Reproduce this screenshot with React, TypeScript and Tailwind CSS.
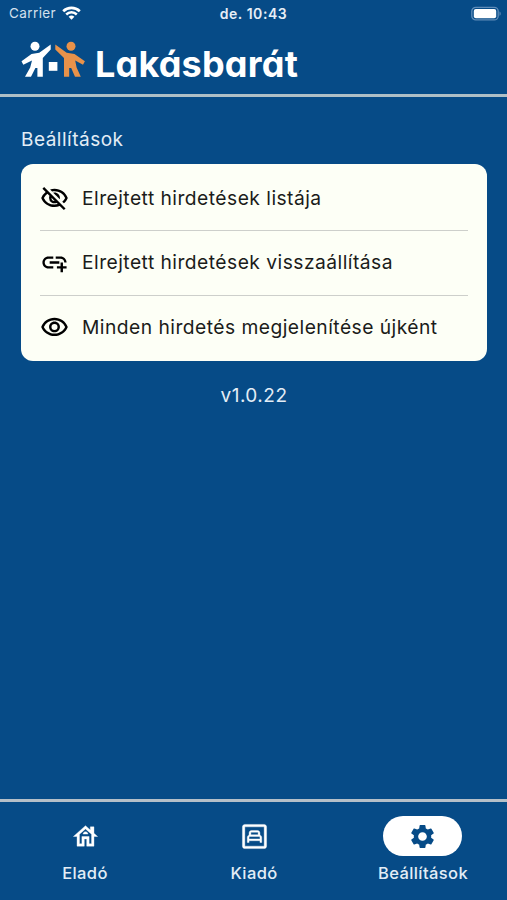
import React from "react";
import type { IconType } from "react-icons";
import {
  MdAddLink,
  MdOutlineBedroomChild,
  MdOutlineHouse,
  MdOutlineVisibility,
  MdOutlineVisibilityOff,
  MdSettings,
} from "react-icons/md";

const StatusBar = () => (
  <div className="flex h-7 items-center justify-between px-[9px] text-[13.5px] leading-none">
    <div className="flex flex-1 items-center gap-1.5 text-[#d3e0ed]">
      <span className="tracking-[0.4px]">Carrier</span>
      <svg className="-mt-0.5 h-[14px] w-[19px]" viewBox="0 0 19 14" fill="none">
        <path d="M1.2 5.2a12 12 0 0 1 16.6 0" stroke="white" strokeWidth="2.7" />
        <path d="M4.2 8.5a7.6 7.6 0 0 1 10.6 0" stroke="white" strokeWidth="2.5" />
        <path d="M6.6 10.8a4.2 4.2 0 0 1 5.8 0L9.5 13.8z" fill="white" />
      </svg>
    </div>
    <span className="text-[14px] font-semibold tracking-[0.55px] text-[#e6eef6]">de. 10:43</span>
    <div className="flex flex-1 justify-end">
      <svg className="-mr-1 -mt-0.5 h-[15px] w-[31px]" viewBox="0 0 31 15">
        <rect x="0.8" y="1.3" width="26.4" height="12.6" rx="4" fill="none" stroke="#5f8cb8" strokeWidth="1.3" />
        <rect x="2.8" y="3" width="22.4" height="9.2" rx="2" fill="white" />
        <path d="M28.5 5.4c1.6.6 1.6 3.8 0 4.4z" fill="#5f8cb8" />
      </svg>
    </div>
  </div>
);

const Logo = () => (
  <svg className="h-[38px] w-[66px] shrink-0" viewBox="0 0 66 38">
    <g fill="white">
      <circle cx="14" cy="6.2" r="4.5" />
      <path d="M29.7 4.6V9.5L21.8 18V36.7H16.4V28H14.4L10 36.7H4L9.2 27.5L11 20.6L2.3 24.8L0.5 21.2L10.5 14L18.3 12.7z" />
      <rect x="27.8" y="22" width="8.6" height="8.8" />
    </g>
    <g fill="#e8924a">
      <circle cx="50" cy="6.2" r="4.5" />
      <path d="M34.3 4.6V9.5L43 18V36.7H48.2V28H50.2L54 36.7H59.8L55.6 27.5L54.2 20.6L62 24.8L63.9 21.2L53.5 14L45.7 12.7z" />
    </g>
  </svg>
);

const Header = () => (
  <header className="flex h-[69px] items-start border-b-[3px] border-[#aebfc6] pl-[21px] pt-3">
    <Logo />
    <h1 className="ml-2 mt-1 text-[36px] font-bold leading-[40px] tracking-[0.2px] text-white [font-feature-settings:'cv11']">
      Lakásbarát
    </h1>
  </header>
);

interface MenuItemProps {
  icon: IconType;
  label: string;
}

const MenuItem = ({ icon: Icon, label }: MenuItemProps) => (
  <button className="flex h-[64.5px] w-full items-center gap-[13px] text-left text-[#1b1c1a]">
    <Icon className="size-[29px] shrink-0 text-black" />
    <span className="whitespace-nowrap text-[19.25px] tracking-[0.46px]">{label}</span>
  </button>
);

interface TabProps extends MenuItemProps {
  active?: boolean;
}

const Tab = ({ icon: Icon, label, active }: TabProps) => (
  <button className="flex flex-1 flex-col items-center">
    <span
      className={
        active
          ? "flex h-10 w-[79px] items-center justify-center rounded-full bg-white text-[#064b87]"
          : "flex h-10 w-[79px] items-center justify-center text-white"
      }
    >
      <Icon
        className={
          active
            ? "size-[29px]"
            : "ml-px size-[29px] stroke-white stroke-[0.3px] [&_[fill=none]]:stroke-none"
        }
      />
    </span>
    <span className="ml-px mt-[5px] text-[16.5px] font-medium leading-6 tracking-[0.4px] text-[#e3edf6]">
      {label}
    </span>
  </button>
);

export default function App() {
  return (
    <div className="flex h-screen w-full flex-col overflow-hidden bg-[#064b87] font-['Inter',sans-serif]">
      <StatusBar />
      <Header />
      <main className="grow pl-[21px] pr-5 pt-[29px]">
        <h2 className="text-[19px] leading-7 tracking-[0.5px] text-[#e3edf6]">Beállítások</h2>
        <div className="mt-[9.5px] divide-y divide-[#cdcfcb] rounded-xl bg-[#fdfff6] px-[19px] pb-px pt-[3px]">
          <MenuItem icon={MdOutlineVisibilityOff} label="Elrejtett hirdetések listája" />
          <MenuItem icon={MdAddLink} label="Elrejtett hirdetések visszaállítása" />
          <MenuItem icon={MdOutlineVisibility} label="Minden hirdetés megjelenítése újként" />
        </div>
        <p className="mt-[21px] text-center text-[19px] leading-7 tracking-[0.5px] text-[#e3edf6]">v1.0.22</p>
      </main>
      <nav className="flex h-[101px] border-t-[3px] border-[#b4bfc8] pt-3.5">
        <Tab icon={MdOutlineHouse} label="Eladó" />
        <Tab icon={MdOutlineBedroomChild} label="Kiadó" />
        <Tab icon={MdSettings} label="Beállítások" active />
      </nav>
    </div>
  );
}
